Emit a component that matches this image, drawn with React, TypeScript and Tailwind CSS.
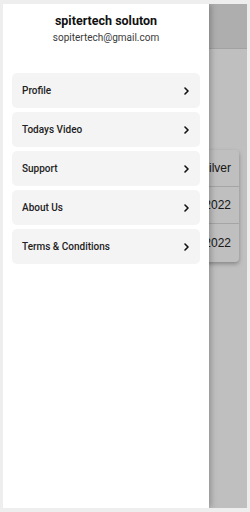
import React from 'react';

const items = ['Profile', 'Todays Video', 'Support', 'About Us', 'Terms & Conditions'];

function Chevron() {
  return (
    <svg width="5" height="8" viewBox="0 0 5 8" fill="none">
      <path d="M1 1 L4 4 L1 7" stroke="#111" strokeWidth="1.6" strokeLinecap="round" strokeLinejoin="round" />
    </svg>
  );
}

export default function App() {
  return (
    <div className="w-[250px] h-[512px] bg-[#eeeeee] pt-[4px] pl-[3px] pr-[3px] pb-[4px]" style={{ fontFamily: 'Roboto, "Liberation Sans", sans-serif' }}>
      <div className="relative h-full overflow-hidden bg-white">
        {/* page behind the drawer */}
        <div className="h-[45px] bg-[#e8e8e8] border-b border-[#d8d8d8]"></div>
        <div className="mt-[101px] ml-[6px] w-[230px] rounded bg-white shadow-[0_2px_4px_rgba(0,0,0,0.3)]" style={{ fontFamily: '"Liberation Sans", Arial, sans-serif' }}>
          <div className="h-[37px] flex items-center justify-end pr-[8px] text-[12px] text-[#222] border-b border-[#ddd]">
            Plan: <span className="ml-1">silver</span>
          </div>
          <div className="h-[37px] flex items-center justify-end pr-[8px] text-[12px] text-[#222] border-b border-[#ddd]">
            12-06-2022
          </div>
          <div className="h-[38px] flex items-center justify-end pr-[8px] text-[12px] text-[#222]">
            12-07-2022
          </div>
        </div>

        {/* overlay */}
        <div className="absolute inset-0 bg-black/25"></div>

        {/* drawer */}
        <div className="absolute left-0 top-0 bottom-0 w-[206px] bg-white shadow-[2px_0_6px_rgba(0,0,0,0.25)] flex flex-col">
          <div className="pt-[9px] text-center">
            <div className="text-[12.5px] font-bold text-[#111] leading-[16px]">spitertech soluton</div>
            <div className="text-[10px] text-[#3a3a3a] leading-[14px] mt-[2px]">sopitertech@gmail.com</div>
          </div>
          <div className="mt-[28px] px-[9px] flex flex-col gap-[4px]">
            {items.map((t) => (
              <div key={t} className="h-[35px] rounded-[5px] bg-[#f4f4f4] flex items-center justify-between pl-[10px] pr-[11px]">
                <span className="text-[10px] font-medium text-[#222]">{t}</span>
                <Chevron />
              </div>
            ))}
          </div>
        </div>
      </div>
    </div>
  );
}
